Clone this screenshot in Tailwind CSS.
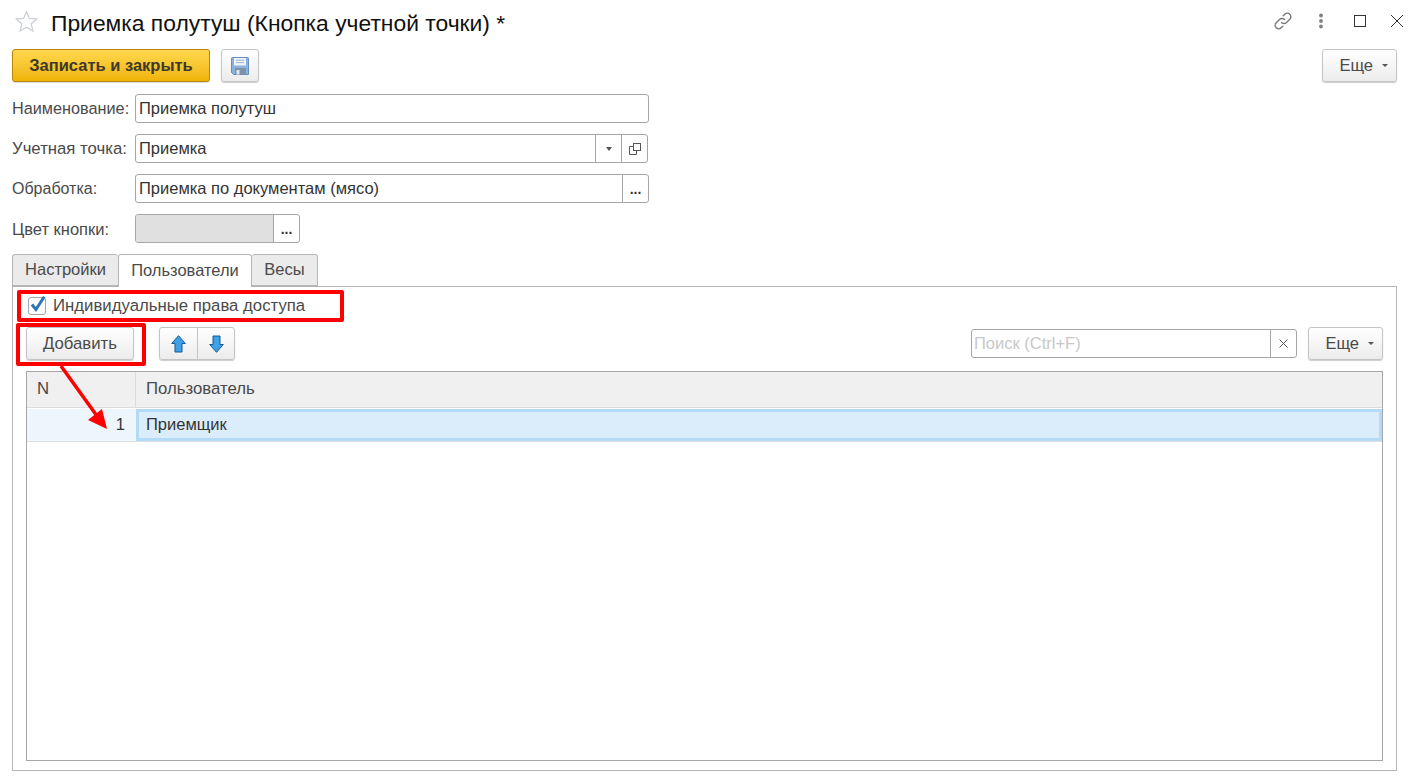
<!DOCTYPE html>
<html lang="ru"><head><meta charset="utf-8"><title>Приемка полутуш</title>
<script src="https://cdn.jsdelivr.net/npm/@tailwindcss/browser@4"></script></head>
<body class="bg-white">
<div class="relative w-[1419px] h-[782px] overflow-hidden bg-white font-['Liberation_Sans',Arial,sans-serif] text-[16.5px] leading-[18px] text-[#4a4a4a]">

<!-- title bar -->
<div class="flex items-start h-[46px] pl-[15px] pr-[15px]">
  <svg class="w-[23px] h-[23px] mt-[10px] shrink-0" viewBox="0 0 23 23" fill="none" stroke="#c9ced4" stroke-width="1.2"><path d="M11.5 1.5l2.9 6.9 7.4.6-5.6 4.8 1.7 7.2-6.4-3.8-6.4 3.8 1.7-7.2L1.2 9l7.4-.6z"/></svg>
  <div class="ml-[13px] mt-[10px] text-[22.85px] leading-[26px] text-[#111] whitespace-nowrap">Приемка полутуш (Кнопка учетной точки) *</div>
  <div class="ml-auto mt-[10px] flex items-center">
    <svg class="w-[22px] h-[22px]" viewBox="0 0 22 22" fill="none" stroke="#7a7a7a" stroke-width="1.4" stroke-linecap="round"><path d="M9.5 12.5a3.5 3.5 0 0 0 5 0l3.3-3.3a3.5 3.5 0 0 0-5-5l-1.6 1.6"/><path d="M12.5 9.5a3.5 3.5 0 0 0-5 0l-3.3 3.3a3.5 3.5 0 0 0 5 5l1.6-1.6"/></svg>
    <svg class="w-[6px] h-[16px] ml-[24px]" viewBox="0 0 6 16" fill="#808080"><circle cx="3" cy="2.5" r="1.9"/><circle cx="3" cy="8" r="1.9"/><circle cx="3" cy="13.5" r="1.9"/></svg>
    <div class="w-[12px] h-[12px] ml-[30px] border border-[#333]"></div>
    <svg class="w-[14px] h-[14px] ml-[24px]" viewBox="0 0 14 14" fill="none" stroke="#333" stroke-width="1"><path d="M1 1l12 12M13 1L1 13"/></svg>
  </div>
</div>

<!-- command bar -->
<div class="flex mt-[3px] pl-[12px] pr-[22px] h-[33px]">
  <button class="w-[198px] h-[33px] pb-[2px] rounded-[3px] border border-[#b8860b] bg-gradient-to-b from-[#ffd84a] to-[#f0b400] font-bold text-[#40392a] shadow-[0_1px_1px_rgba(0,0,0,0.15)]">Записать и закрыть</button>
  <button class="ml-[11px] w-[38px] h-[33px] rounded-[3px] border border-[#c4c4c4] bg-gradient-to-b from-white to-[#ececec] shadow-[0_1px_1px_rgba(0,0,0,0.2)] flex items-center justify-center">
    <svg class="w-[18px] h-[18px]" viewBox="0 0 18 18"><path d="M0.5 1.5a1 1 0 0 1 1-1h15a1 1 0 0 1 1 1v16h-15l-2-2z" fill="#8db2dc" stroke="#5f8fc4"/><rect x="3" y="1" width="12" height="7.5" fill="#eef3f9"/><path d="M5 3.2h8M5 5.6h8" stroke="#9db6d2"/><rect x="4" y="11" width="11" height="6.5" fill="#7d93a8"/><rect x="5.5" y="13" width="3" height="4.5" fill="#dfe7ef"/></svg>
  </button>
  <button class="ml-auto w-[75px] h-[33px] pb-[2px] rounded-[3px] border border-[#c4c4c4] bg-gradient-to-b from-white to-[#ececec] shadow-[0_1px_1px_rgba(0,0,0,0.2)] flex items-center justify-end pr-[8px]"><span>Еще</span><span class="ml-[9px] mt-[2px] w-0 h-0 border-x-[3px] border-x-transparent border-t-[3px] border-t-[#555]"></span></button>
</div>

<!-- form -->
<div class="ml-[12px] mt-[12px] flex flex-col gap-[11px]">
  <div class="flex items-center h-[29px]">
    <div class="w-[123px] pb-[2px] whitespace-nowrap text-[16.25px]">Наименование:</div>
    <div class="w-[514px] h-[29px] pb-[2px] rounded-[3px] border border-[#a6a6a6] pl-[3px] flex items-center text-[#333]">Приемка полутуш</div>
  </div>
  <div class="flex items-center h-[29px]">
    <div class="w-[123px] whitespace-nowrap text-[16.75px]">Учетная точка:</div>
    <div class="w-[513px] h-[29px] rounded-[3px] border border-[#a6a6a6] flex items-stretch text-[#333]">
      <div class="flex-1 pl-[3px] pb-[2px] flex items-center">Приемка</div>
      <div class="w-[26px] border-l border-[#a6a6a6] flex items-center justify-center"><span class="w-0 h-0 border-x-[3.5px] border-x-transparent border-t-[4px] border-t-[#555]"></span></div>
      <div class="w-[26px] border-l border-[#a6a6a6] flex items-center justify-center">
        <svg class="w-[12px] h-[12px]" viewBox="0 0 12 12" fill="none" stroke="#555"><rect x="4.5" y="0.5" width="7" height="7"/><path d="M4.5 3.5h-4v8h7v-4"/></svg>
      </div>
    </div>
  </div>
  <div class="flex items-center h-[29px]">
    <div class="w-[123px] whitespace-nowrap text-[16px]">Обработка:</div>
    <div class="w-[514px] h-[29px] rounded-[3px] border border-[#a6a6a6] flex items-stretch text-[#333]">
      <div class="flex-1 pl-[3px] pb-[2px] flex items-center">Приемка по документам (мясо)</div>
      <div class="w-[26px] border-l border-[#a6a6a6] flex items-end justify-center pb-[6px] font-bold text-[14px] text-[#333] leading-[14px]">...</div>
    </div>
  </div>
  <div class="flex items-center h-[29px]">
    <div class="w-[123px] whitespace-nowrap text-[16.5px]">Цвет кнопки:</div>
    <div class="w-[165px] h-[29px] rounded-[3px] border border-[#a6a6a6] flex items-stretch">
      <div class="flex-1 bg-[#e0e0e0] rounded-l-[3px]"></div>
      <div class="w-[26px] border-l border-[#a6a6a6] flex items-end justify-center pb-[6px] font-bold text-[14px] text-[#333] leading-[14px]">...</div>
    </div>
  </div>
</div>

<!-- tabs -->
<div class="relative z-10 flex ml-[12px] mt-[11px] h-[33px]">
  <div class="w-[106px] h-[32px] pb-[2px] border border-[#b5b5b5] border-r-0 rounded-t-[3px] bg-[#ebebeb] flex items-center justify-center">Настройки</div>
  <div class="w-[134px] h-[33px] pb-[3px] border border-[#b5b5b5] border-b-0 rounded-t-[3px] bg-white flex items-center justify-center">Пользователи</div>
  <div class="w-[66px] h-[32px] pb-[2px] border border-[#b5b5b5] border-l-0 rounded-t-[3px] bg-[#ebebeb] flex items-center justify-center">Весы</div>
</div>

<!-- panel -->
<div class="ml-[12px] mt-[-1px] w-[1385px] h-[485px] border border-[#b5b5b5] px-[13px]">
  <div class="flex items-center h-[40px] pl-[2px] pb-[3px]">
    <div class="w-[18px] h-[18px] rounded-[3px] border border-[#a6a6a6] bg-white flex items-center justify-center">
      <svg class="w-[19px] h-[19px] mt-[-3px] shrink-0" viewBox="0 0 17 17" fill="none" stroke="#2b74b8" stroke-width="2.6"><path d="M3.5 8.5l3.6 4.5L14.5 1.5"/></svg>
    </div>
    <div class="ml-[7px] whitespace-nowrap text-[16.75px]">Индивидуальные права доступа</div>
  </div>
  <div class="flex items-center h-[33px]">
    <button class="w-[108px] h-[33px] rounded-[3px] border border-[#c4c4c4] bg-gradient-to-b from-white to-[#ececec] shadow-[0_1px_1px_rgba(0,0,0,0.2)] text-[16.75px]">Добавить</button>
    <div class="ml-[25px] w-[76px] h-[33px] rounded-[3px] border border-[#c4c4c4] bg-gradient-to-b from-white to-[#ececec] shadow-[0_1px_1px_rgba(0,0,0,0.2)] flex">
      <div class="w-[38px] flex items-center justify-center border-r border-[#c4c4c4]">
        <svg class="w-[15px] h-[18px]" viewBox="0 0 15 18"><path d="M7.5 .7L14.3 8.5H11V17H4V8.5H.7z" fill="#3ea1e8" stroke="#135b92" stroke-linejoin="round"/></svg>
      </div>
      <div class="flex-1 flex items-center justify-center">
        <svg class="w-[15px] h-[18px]" viewBox="0 0 15 18"><path d="M7.5 17.3L14.3 9.5H11V1H4V9.5H.7z" fill="#3ea1e8" stroke="#135b92" stroke-linejoin="round"/></svg>
      </div>
    </div>
    <div class="ml-auto w-[326px] h-[29px] rounded-[3px] border border-[#a6a6a6] flex items-stretch">
      <div class="flex-1 pl-[2px] pb-[2px] flex items-center text-[#c8c8c8]">Поиск (Ctrl+F)</div>
      <div class="w-[26px] border-l border-[#a6a6a6] flex items-center justify-center">
        <svg class="w-[9px] h-[9px]" viewBox="0 0 9 9" fill="none" stroke="#555"><path d="M.5.5l8 8M8.5.5l-8 8"/></svg>
      </div>
    </div>
    <button class="ml-[11px] w-[75px] h-[33px] pb-[2px] rounded-[3px] border border-[#c4c4c4] bg-gradient-to-b from-white to-[#ececec] shadow-[0_1px_1px_rgba(0,0,0,0.2)] flex items-center justify-end pr-[8px]"><span>Еще</span><span class="ml-[9px] mt-[2px] w-0 h-0 border-x-[3px] border-x-transparent border-t-[3px] border-t-[#555]"></span></button>
  </div>
  <!-- table -->
  <div class="mt-[11px] w-[1357px] h-[390px] border border-[#a6a6a6]">
    <div class="flex h-[36px] bg-[#f0f0f0] border-b border-[#dcdcdc] text-[16.75px]">
      <div class="w-[109px] pl-[10px] pb-[2px] flex items-center border-r border-[#dcdcdc]">N</div>
      <div class="flex-1 pl-[10px] pb-[2px] flex items-center">Пользователь</div>
    </div>
    <div class="flex h-[33px] border-b border-[#e0e0e0] mt-[1px] text-[#333]">
      <div class="w-[109px] bg-[#edf5fd] flex items-center justify-end pr-[11px] pb-[3px]">1</div>
      <div class="flex-1 bg-[#dbedfb] border-[3px] border-[#b5daf5] pl-[7px] pb-[2px] flex items-center">Приемщик</div>
    </div>
  </div>
</div>

<!-- annotation overlays -->
<div class="absolute left-[17px] top-[290px] w-[327px] h-[32px] border-[4px] border-[#ff0000] rounded-[2px]"></div>
<div class="absolute left-[16px] top-[323px] w-[130px] h-[43px] border-[4px] border-[#ff0000] rounded-[2px]"></div>
<svg class="absolute left-[55px] top-[362px] w-[60px] h-[72px]" viewBox="0 0 60 72"><path d="M6 4L42 54" stroke="#ff0000" stroke-width="3.5" fill="none"/><path d="M52 67L33 58L47 47z" fill="#ff0000"/></svg>
</div>
</body></html>
